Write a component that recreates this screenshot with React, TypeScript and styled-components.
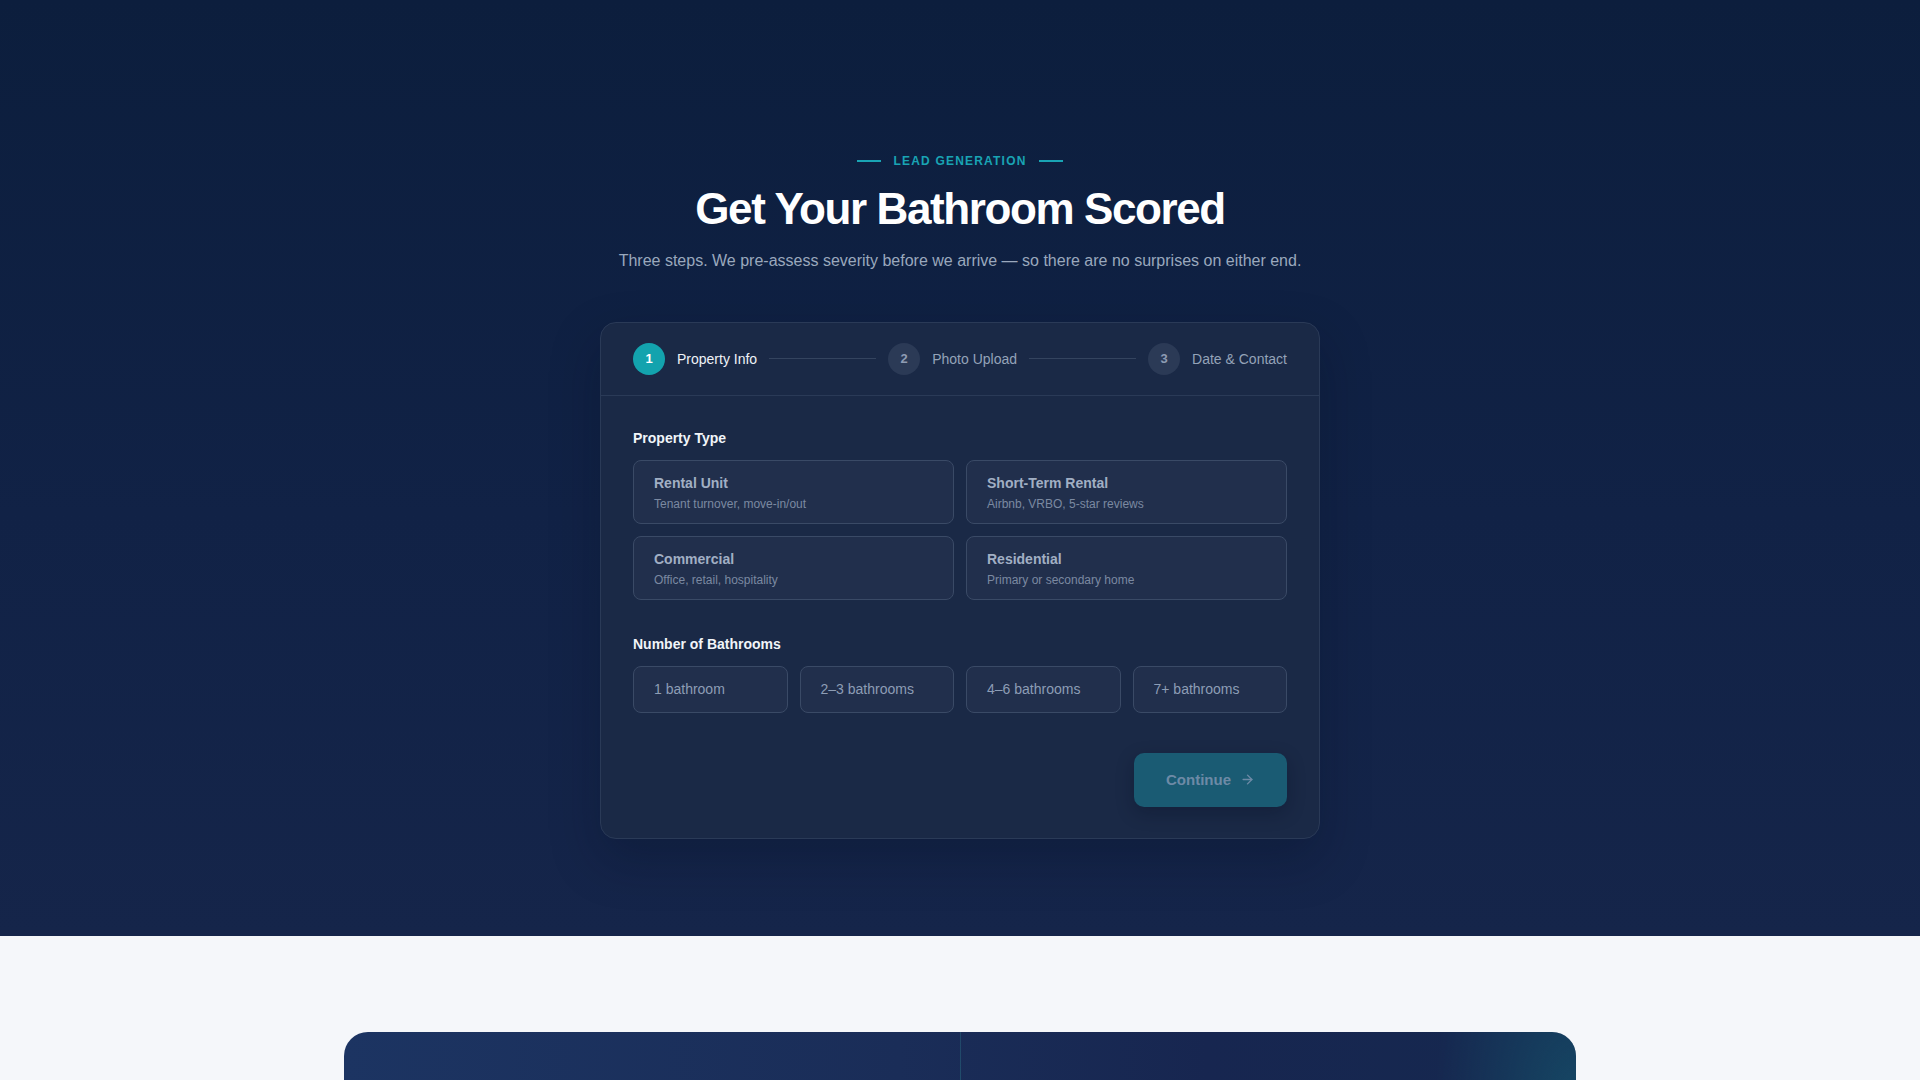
import { useState } from "react";
import styled, { createGlobalStyle } from "styled-components";
import { ArrowRight } from "lucide-react";

const GlobalStyle = createGlobalStyle`
  * { box-sizing: border-box; }
  html, body { margin: 0; padding: 0; }
  body {
    font-family: "Liberation Sans", Arial, sans-serif;
    background: #f5f7fa;
    -webkit-font-smoothing: antialiased;
  }
`;

const propertyTypes = [
  { id: "rental", title: "Rental Unit", sub: "Tenant turnover, move-in/out" },
  { id: "str", title: "Short-Term Rental", sub: "Airbnb, VRBO, 5-star reviews" },
  { id: "commercial", title: "Commercial", sub: "Office, retail, hospitality" },
  { id: "residential", title: "Residential", sub: "Primary or secondary home" },
];

const bathroomCounts = ["1 bathroom", "2–3 bathrooms", "4–6 bathrooms", "7+ bathrooms"];

const steps = ["Property Info", "Photo Upload", "Date & Contact"];

const App = () => {
  const [current] = useState(0);
  const [propertyType, setPropertyType] = useState<string | null>(null);
  const [bathrooms, setBathrooms] = useState<string | null>(null);
  const canContinue = propertyType !== null && bathrooms !== null;

  return (
    <>
      <GlobalStyle />
      <LeadSection>
        <Eyebrow>
          <EyebrowLine />
          <span>LEAD GENERATION</span>
          <EyebrowLine />
        </Eyebrow>
        <Title>Get Your Bathroom Scored</Title>
        <Subtitle>
          Three steps. We pre-assess severity before we arrive — so there are no surprises on either end.
        </Subtitle>

        <FormCard>
          <Stepper>
            {steps.map((label, i) => (
              <StepGroup key={label} $last={i === steps.length - 1}>
                <Step>
                  <StepNumber $active={i === current}>{i + 1}</StepNumber>
                  <StepLabel $active={i === current}>{label}</StepLabel>
                </Step>
                {i < steps.length - 1 && <Connector />}
              </StepGroup>
            ))}
          </Stepper>

          <FormBody>
            <Field>
              <FieldLabel>Property Type</FieldLabel>
              <TypeGrid>
                {propertyTypes.map((t) => (
                  <TypeOption
                    key={t.id}
                    $selected={propertyType === t.id}
                    onClick={() => setPropertyType(t.id)}
                  >
                    <TypeTitle>{t.title}</TypeTitle>
                    <TypeSub>{t.sub}</TypeSub>
                  </TypeOption>
                ))}
              </TypeGrid>
            </Field>

            <Field>
              <FieldLabel>Number of Bathrooms</FieldLabel>
              <CountGrid>
                {bathroomCounts.map((c) => (
                  <CountOption key={c} $selected={bathrooms === c} onClick={() => setBathrooms(c)}>
                    {c}
                  </CountOption>
                ))}
              </CountGrid>
            </Field>

            <Actions>
              <ContinueButton disabled={!canContinue}>
                Continue
                <ArrowRight size={15} strokeWidth={2.25} />
              </ContinueButton>
            </Actions>
          </FormBody>
        </FormCard>
      </LeadSection>

      <NextSection>
        <Banner>
          <BannerColumn />
          <BannerColumn $right />
        </Banner>
      </NextSection>
    </>
  );
};

const LeadSection = styled.section`
  display: flex;
  flex-direction: column;
  align-items: center;
  padding: 153px 0 97px;
  background: linear-gradient(180deg, #0c1e3d 0%, #112246 55%, #15254a 100%);
`;

const Eyebrow = styled.div`
  display: flex;
  align-items: center;
  gap: 12px;
  height: 16px;
  font-size: 12px;
  font-weight: 700;
  letter-spacing: 0.1em;
  color: #19a4b4;
`;

const EyebrowLine = styled.span`
  width: 24px;
  height: 2px;
  background: #19a4b4;
`;

const Title = styled.h1`
  margin: 14px 0 0;
  font-size: 44px;
  line-height: 1.2;
  font-weight: 700;
  letter-spacing: -1.4px;
  color: #ffffff;
`;

const Subtitle = styled.p`
  margin: 13px 0 0;
  font-size: 16px;
  line-height: 24px;
  color: #9aa8bd;
`;

const FormCard = styled.div`
  width: 720px;
  margin-top: 49px;
  background: #1a2946;
  border: 1px solid #2a3a57;
  border-radius: 16px;
  box-shadow: 0 20px 50px rgba(4, 10, 28, 0.25);
`;

const Stepper = styled.div`
  display: flex;
  align-items: center;
  padding: 20px 32px;
  border-bottom: 1px solid #2a3a57;
`;

const StepGroup = styled.div<{ $last: boolean }>`
  display: flex;
  align-items: center;
  gap: 12px;
  flex: ${(p) => (p.$last ? "0 0 auto" : "1 1 auto")};
  margin-right: ${(p) => (p.$last ? "0" : "12px")};
`;

const Step = styled.div`
  display: flex;
  align-items: center;
  gap: 12px;
  flex-shrink: 0;
`;

const StepNumber = styled.span<{ $active: boolean }>`
  display: flex;
  align-items: center;
  justify-content: center;
  width: 32px;
  height: 32px;
  border-radius: 50%;
  font-size: 13px;
  font-weight: 700;
  background: ${(p) => (p.$active ? "#13a3ae" : "#2b3a56")};
  color: ${(p) => (p.$active ? "#ffffff" : "#8e9cb3")};
`;

const StepLabel = styled.span<{ $active: boolean }>`
  font-size: 14px;
  color: ${(p) => (p.$active ? "#eef2f7" : "#94a3b8")};
`;

const Connector = styled.span`
  flex: 1;
  height: 1px;
  background: #34445f;
`;

const FormBody = styled.div`
  display: flex;
  flex-direction: column;
  gap: 34px;
  padding: 32px 32px 31px;
`;

const Field = styled.div`
  display: flex;
  flex-direction: column;
`;

const FieldLabel = styled.div`
  margin-bottom: 12px;
  font-size: 14px;
  line-height: 20px;
  font-weight: 700;
  color: #f1f5f9;
`;

const TypeGrid = styled.div`
  display: grid;
  grid-template-columns: 1fr 1fr;
  gap: 12px;
`;

const TypeOption = styled.button<{ $selected: boolean }>`
  display: flex;
  flex-direction: column;
  justify-content: center;
  gap: 6px;
  height: 64px;
  padding: 2px 20px 0;
  text-align: left;
  font-family: inherit;
  background: ${(p) => (p.$selected ? "rgba(19, 163, 174, 0.14)" : "#212f4c")};
  border: 1px solid ${(p) => (p.$selected ? "#13a3ae" : "#3a4a66")};
  border-radius: 8px;
  cursor: pointer;
`;

const TypeTitle = styled.span`
  font-size: 14px;
  font-weight: 700;
  line-height: 16px;
  color: #a1afc4;
`;

const TypeSub = styled.span`
  font-size: 12px;
  line-height: 14px;
  color: #7b89a1;
`;

const CountGrid = styled.div`
  display: grid;
  grid-template-columns: repeat(4, 1fr);
  gap: 12px;
`;

const CountOption = styled.button<{ $selected: boolean }>`
  height: 47px;
  padding: 0 20px;
  text-align: left;
  font-family: inherit;
  font-size: 14px;
  color: #8d9db5;
  background: ${(p) => (p.$selected ? "rgba(19, 163, 174, 0.14)" : "#212f4c")};
  border: 1px solid ${(p) => (p.$selected ? "#13a3ae" : "#3a4a66")};
  border-radius: 8px;
  cursor: pointer;
`;

const Actions = styled.div`
  display: flex;
  justify-content: flex-end;
  margin-top: 6px;
`;

const ContinueButton = styled.button`
  display: flex;
  align-items: center;
  gap: 9px;
  height: 54px;
  padding: 0 32px;
  font-family: inherit;
  font-size: 15px;
  font-weight: 700;
  color: #6d8aa6;
  background: #1a5b73;
  border: none;
  border-radius: 10px;
  box-shadow: 0 6px 18px rgba(6, 14, 34, 0.3);

  &:disabled {
    cursor: not-allowed;
  }
`;

const NextSection = styled.section`
  display: flex;
  justify-content: center;
  padding: 96px 0 96px;
  background: #f5f7fa;
`;

const Banner = styled.div`
  display: grid;
  grid-template-columns: 1fr 1fr;
  width: 1232px;
  min-height: 420px;
  border-radius: 24px;
  overflow: hidden;
  background: linear-gradient(90deg, #1c3462 0%, #1a2d58 45%, #172650 70%, #15284f 100%);
`;

const BannerColumn = styled.div<{ $right?: boolean }>`
  border-left: ${(p) => (p.$right ? "1px solid rgba(255, 255, 255, 0.04)" : "none")};
  background: ${(p) =>
    p.$right
      ? "radial-gradient(ellipse 200px 320px at 100% 15%, rgba(22, 100, 120, 0.5), transparent 70%)"
      : "none"};
`;

export default App;
